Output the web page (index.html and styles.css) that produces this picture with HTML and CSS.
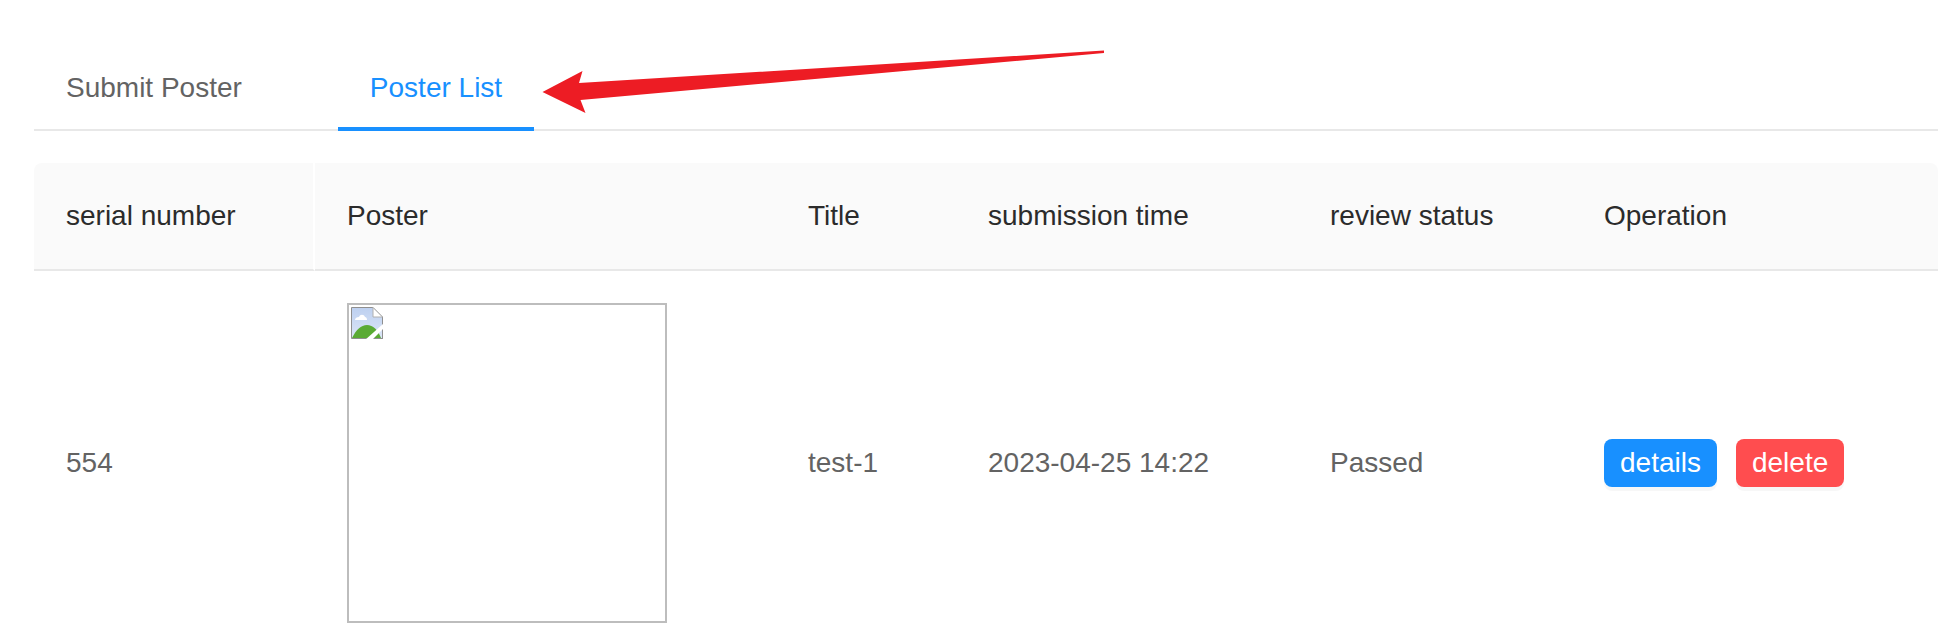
FILE: index.html
```html
<!DOCTYPE html>
<html lang="en">
<head>
    <meta charset="UTF-8">
    <title>Poster List</title>
    <link rel="stylesheet" href="styles.css">
</head>
<body>
    <div class="tabs">
        <div class="tab">Submit Poster</div>
        <div class="tab active">Poster List</div>
    </div>
    <table class="poster-table">
        <colgroup>
            <col class="col-serial">
            <col class="col-poster">
            <col class="col-title">
            <col class="col-time">
            <col class="col-status">
            <col>
        </colgroup>
        <thead>
            <tr>
                <th>serial number</th>
                <th>Poster</th>
                <th>Title</th>
                <th>submission time</th>
                <th>review status</th>
                <th>Operation</th>
            </tr>
        </thead>
        <tbody>
            <tr>
                <td>554</td>
                <td>
                    <div class="poster-img">
                        <svg class="broken-icon" width="32" height="32" viewBox="0 0 32 32">
                            <defs>
                                <linearGradient id="sky" x1="0" y1="0" x2="0" y2="1">
                                    <stop offset="0" stop-color="#bdd0f0"/>
                                    <stop offset="1" stop-color="#dce6f7"/>
                                </linearGradient>
                            </defs>
                            <path d="M0.5 0.5H22L31.5 10V31.5H0.5Z" fill="url(#sky)" stroke="#8f8f8f"/>
                            <path d="M22 0.5V10H31.5Z" fill="#fff" stroke="#b0b0b0"/>
                            <path d="M4 13c0-2 2-3 4-3 1-3 5-3 6 0 1 0 2 1 2 3Z" fill="#fff"/>
                            <path d="M1 31c4-8 9-13 15-13 6 0 11 5 14 13Z" fill="#5aaa34"/>
                            <path d="M14 33L33 16V21L21 33Z" fill="#fff"/>
                            <path d="M31.5 23V31.5H23" fill="none" stroke="#8f8f8f"/>
                        </svg>
                    </div>
                </td>
                <td>test-1</td>
                <td>2023-04-25 14:22</td>
                <td>Passed</td>
                <td>
                    <div class="actions">
                        <button class="btn btn-details">details</button>
                        <button class="btn btn-delete">delete</button>
                    </div>
                </td>
            </tr>
        </tbody>
    </table>
    <!-- red annotation arrow drawn over the screenshot -->
    <svg class="arrow" width="1944" height="140" viewBox="0 0 1944 140">
        <path d="M1104 50.5L579 83L582.5 71L542.5 92L585.5 113L580.5 100L1104 53Z" fill="#ed1c24"/>
    </svg>
</body>
</html>
```

FILE: styles.css
```css
html {
    overflow: hidden;
}
body {
    font-family: "Liberation Sans", Arial, sans-serif;
    font-size: 28px;
    margin: 0;
    padding: 68px 6px 0 34px;
    background-color: #fff;
    color: #636363;
}
.tabs {
    display: flex;
    border-bottom: 2px solid #e8e8e8;
}
.tab {
    padding: 0 32px 19px;
    margin-right: 64px;
    margin-bottom: -2px;
    line-height: 40px;
    border-bottom: 4px solid transparent;
}
.tab.active {
    color: #1890ff;
    border-bottom-color: #1890ff;
    margin-right: 0;
}
.poster-table {
    width: 100%;
    margin-top: 32px;
    border-collapse: separate;
    border-spacing: 0;
    table-layout: fixed;
}
.col-serial {
    width: 281px;
}
.col-poster {
    width: 461px;
}
.col-title {
    width: 180px;
}
.col-time {
    width: 342px;
}
.col-status {
    width: 274px;
}
th {
    height: 106px;
    padding: 0 32px;
    background: #fafafa;
    border-bottom: 2px solid #e8e8e8;
    color: #2b2b2b;
    font-weight: 400;
    text-align: left;
    white-space: nowrap;
}
th:first-child {
    border-top-left-radius: 8px;
    border-right: 2px solid #fff;
}
th:last-child {
    border-top-right-radius: 8px;
}
td {
    padding: 32px;
    white-space: nowrap;
}
.poster-img {
    box-sizing: border-box;
    width: 320px;
    height: 320px;
    padding: 2px;
    border: 2px solid #bdbdbd;
}
.broken-icon {
    display: block;
}
.actions {
    display: flex;
    gap: 19px;
}
.btn {
    font-family: inherit;
    font-size: 28px;
    height: 48px;
    padding: 0 16px;
    border: none;
    border-radius: 8px;
    color: #fff;
    box-shadow: 0 4px 0 rgba(0,0,0,0.03);
    cursor: pointer;
}
.btn-details {
    background: #1890ff;
}
.btn-delete {
    background: #ff4d4f;
}
.arrow {
    position: absolute;
    top: 0;
    left: 0;
}
```
